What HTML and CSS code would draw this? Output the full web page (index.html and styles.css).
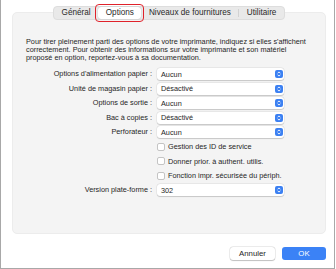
FILE: index.html
```html
<!DOCTYPE html>
<html lang="fr">
  <head>
    <meta name="viewport" content="width=device-width, initial-scale=1">
    <link rel="stylesheet" href="styles.css">
  </head>
  <body>
    <div class="window">
      <div class="panel">
        <div class="tabs">
          <div class="tab">Général</div>
          <div class="tab selected">Options</div>
          <div class="tab">Niveaux de fournitures</div>
          <div class="tab sep">Utilitaire</div>
        </div>

        <p class="intro">Pour tirer pleinement parti des options de votre imprimante, indiquez si elles s'affichent correctement. Pour obtenir des informations sur votre imprimante et son matériel proposé en option, reportez-vous à sa documentation.</p>

        <div class="form">
          <div class="label">Options d'alimentation papier :</div>
          <div class="popup"><span>Aucun</span><i class="stepper"><svg viewBox="0 0 8 8"><path d="M2.6 3.3 L4 1.9 L5.4 3.3 M2.6 4.7 L4 6.1 L5.4 4.7"/></svg></i></div>

          <div class="label">Unité de magasin papier :</div>
          <div class="popup"><span>Désactivé</span><i class="stepper"><svg viewBox="0 0 8 8"><path d="M2.6 3.3 L4 1.9 L5.4 3.3 M2.6 4.7 L4 6.1 L5.4 4.7"/></svg></i></div>

          <div class="label">Options de sortie :</div>
          <div class="popup"><span>Aucun</span><i class="stepper"><svg viewBox="0 0 8 8"><path d="M2.6 3.3 L4 1.9 L5.4 3.3 M2.6 4.7 L4 6.1 L5.4 4.7"/></svg></i></div>

          <div class="label">Bac à copies :</div>
          <div class="popup"><span>Désactivé</span><i class="stepper"><svg viewBox="0 0 8 8"><path d="M2.6 3.3 L4 1.9 L5.4 3.3 M2.6 4.7 L4 6.1 L5.4 4.7"/></svg></i></div>

          <div class="label">Perforateur :</div>
          <div class="popup"><span>Aucun</span><i class="stepper"><svg viewBox="0 0 8 8"><path d="M2.6 3.3 L4 1.9 L5.4 3.3 M2.6 4.7 L4 6.1 L5.4 4.7"/></svg></i></div>

          <div class="label"></div>
          <label class="check"><i class="box"></i>Gestion des ID de service</label>

          <div class="label"></div>
          <label class="check"><i class="box"></i>Donner prior. à authent. utilis.</label>

          <div class="label"></div>
          <label class="check"><i class="box"></i>Fonction impr. sécurisée du périph.</label>

          <div class="label">Version plate-forme :</div>
          <div class="popup"><span>302</span><i class="stepper"><svg viewBox="0 0 8 8"><path d="M2.6 3.3 L4 1.9 L5.4 3.3 M2.6 4.7 L4 6.1 L5.4 4.7"/></svg></i></div>
        </div>
      </div>

      <div class="buttons">
        <button class="btn">Annuler</button>
        <button class="btn default">OK</button>
      </div>
    </div>
  </body>
</html>
```

FILE: styles.css
```css
html,
body {
  margin: 0;
  background: #ffffff;
  font-family: 'Liberation Sans', Arial, sans-serif;
  color: #262626;
}

.window {
  width: 335px;
  height: 269px;
  box-sizing: border-box;
  border: 1px solid #a8a8a8;
  border-top: none;
  padding: 12px 8px 0 11px;
}

.panel {
  position: relative;
  height: 222px;
  box-sizing: border-box;
  background: #f4f4f4;
  border: 1px solid #ececec;
  border-radius: 5px;
  padding: 25px 13px 0 13px;
}

/* segmented tab bar sitting on the top edge of the panel */
.tabs {
  position: absolute;
  top: -7px;
  left: 0;
  right: 0;
  margin: 0 auto;
  width: max-content;
  display: flex;
  height: 14px;
  box-sizing: border-box;
  background: #e9e9e9;
  border: 1px solid #dddddd;
  border-radius: 4px;
  font-size: 8.2px;
  line-height: 12px;
}

.tab {
  padding: 0 7.5px;
  color: #2a2a2a;
}
.tab.sep {
  border-left: 1px solid #d2d2d2;
  margin: 2px 0;
  line-height: 8px;
}
.tab.selected {
  position: relative;
  background: #ffffff;
  border-radius: 3px;
  box-shadow: 0 0 1px rgba(0, 0, 0, 0.3);
}
.tab.selected::after {
  content: "";
  position: absolute;
  top: -3px;
  bottom: -3px;
  left: -3px;
  right: -3px;
  border: 1.5px solid #e0222b;
  border-radius: 4px;
}

.intro {
  margin: 0;
  font-size: 7.3px;
  line-height: 8px;
}

.form {
  display: grid;
  grid-template-columns: 126px 127px;
  column-gap: 5px;
  row-gap: 2.5px;
  margin-top: 6px;
  font-size: 7.3px;
  align-items: center;
}

.label {
  text-align: right;
  height: 12px;
  line-height: 12px;
}

.popup {
  display: flex;
  align-items: center;
  justify-content: space-between;
  height: 12px;
  box-sizing: border-box;
  background: #ffffff;
  border-radius: 3px;
  box-shadow: 0 0 0 0.5px rgba(0, 0, 0, 0.08), 0 0.5px 1px rgba(0, 0, 0, 0.15);
  padding: 0 1.5px 0 4px;
}

.stepper {
  display: block;
  width: 8px;
  height: 8px;
  background: #3b80f2;
  border-radius: 2px;
}
.stepper svg {
  display: block;
  width: 8px;
  height: 8px;
  fill: none;
  stroke: #ffffff;
  stroke-width: 0.9;
}

.check {
  display: flex;
  align-items: center;
  gap: 3px;
  height: 12px;
}
.box {
  display: block;
  width: 8px;
  height: 8px;
  box-sizing: border-box;
  background: #ffffff;
  border: 0.5px solid #c4c4c4;
  border-radius: 2px;
}

.buttons {
  display: flex;
  justify-content: flex-end;
  gap: 7px;
  margin-top: 13px;
}

.btn {
  height: 13px;
  padding: 0;
  border: none;
  border-radius: 3px;
  font-family: 'Liberation Sans', Arial, sans-serif;
  font-size: 7.8px;
  color: #262626;
  background: #ffffff;
  box-shadow: 0 0 0 0.5px rgba(0, 0, 0, 0.12), 0 0.5px 1px rgba(0, 0, 0, 0.2);
  width: 45px;
}
.btn.default {
  width: 44px;
  color: #ffffff;
  background: #3b82f6;
  box-shadow: none;
}
```
